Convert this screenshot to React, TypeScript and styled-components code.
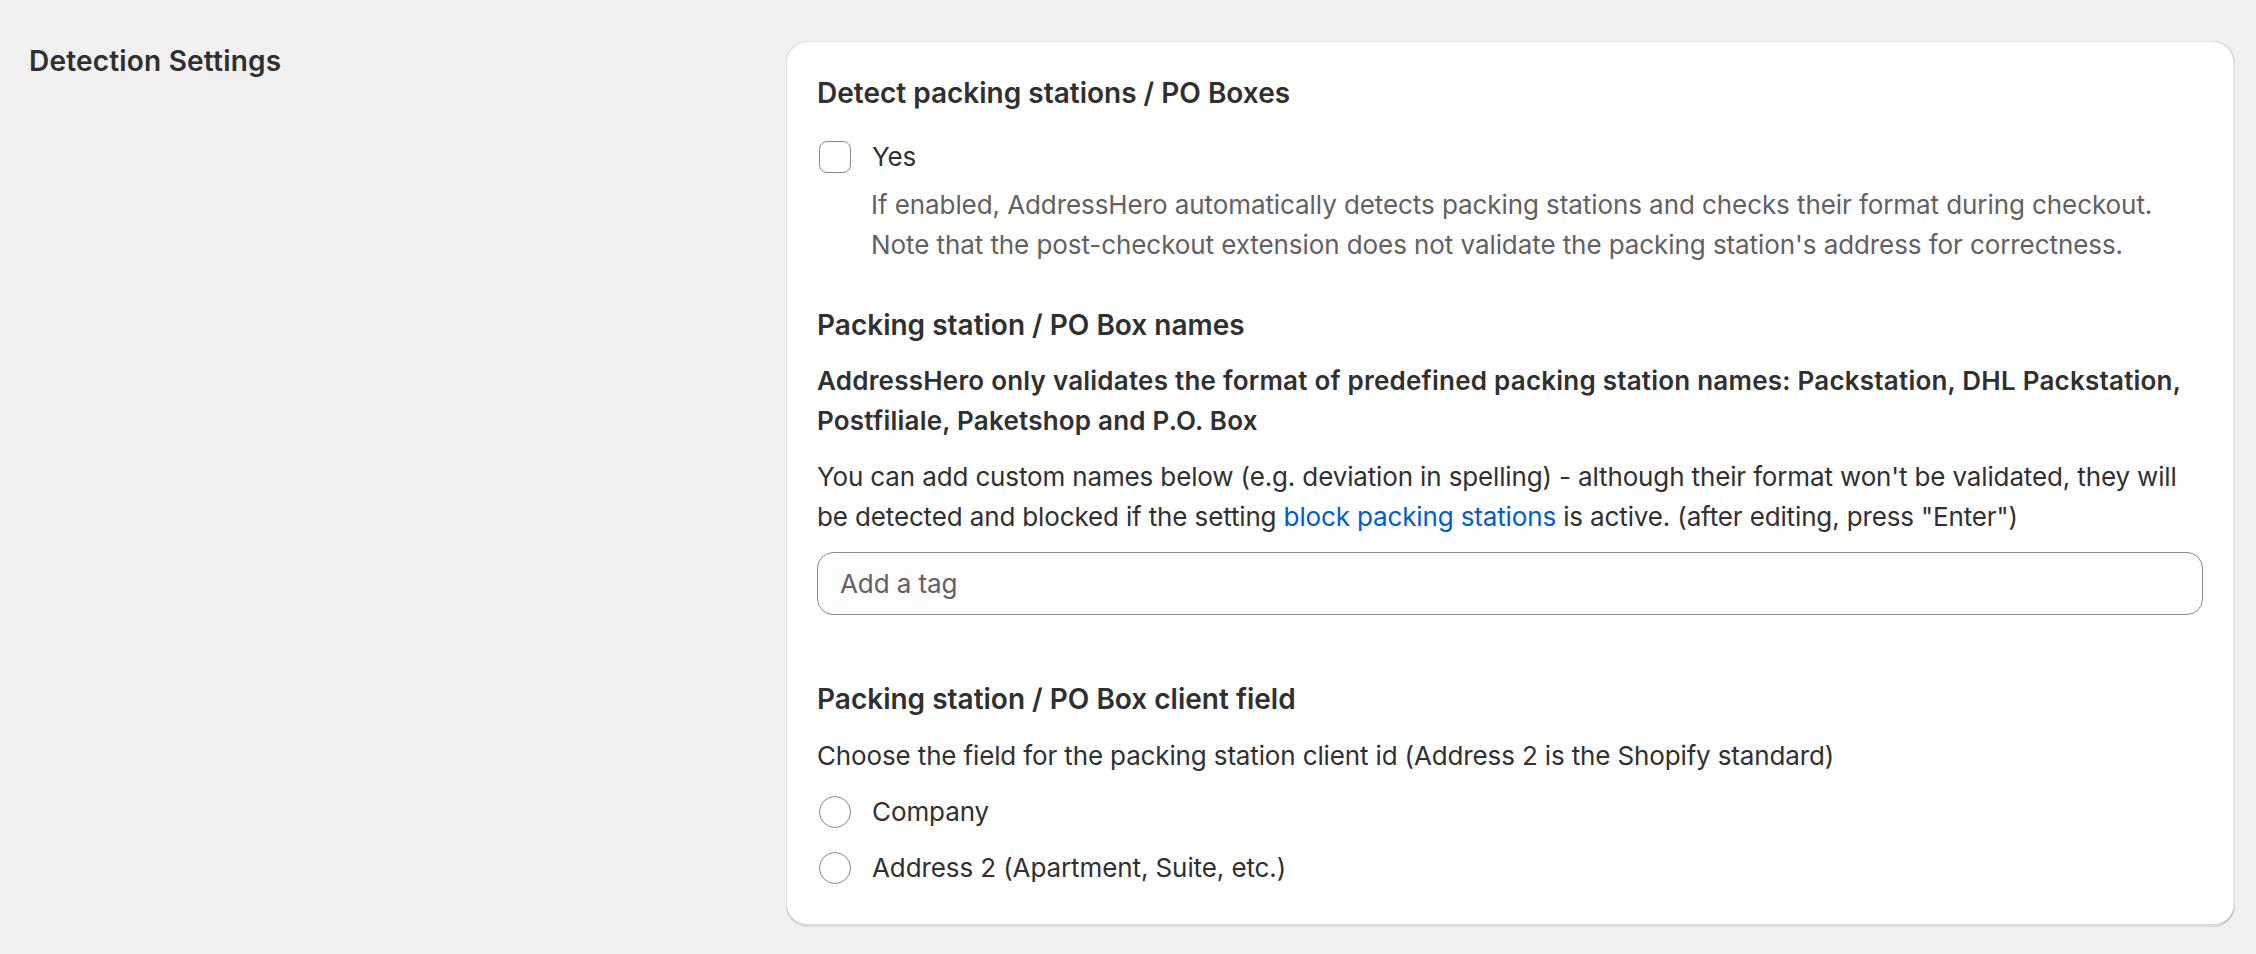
import styled, { createGlobalStyle } from 'styled-components';

const GlobalStyle = createGlobalStyle`
  body {
    margin: 0;
    background: #f1f1f1;
    font-family: Inter, "Noto Sans", sans-serif;
    color: #303030;
    -webkit-font-smoothing: antialiased;
  }
`;

function App() {
  return (
    <>
      <GlobalStyle />
      <Page>
        <Annotation>Detection Settings</Annotation>
        <Card>
          <Heading>Detect packing stations / PO Boxes</Heading>
          <ChoiceRow $top={24}>
            <Checkbox type="checkbox" />
            <ChoiceLabel>Yes</ChoiceLabel>
          </ChoiceRow>
          <HelpText>
            If enabled, AddressHero automatically detects packing stations and checks their format during checkout.
            <br />
            Note that the post-checkout extension does not validate the packing station&apos;s address for correctness.
          </HelpText>

          <Heading $top={40}>Packing station / PO Box names</Heading>
          <Text $top={16} $bold>
            AddressHero only validates the format of predefined packing station names: Packstation, DHL Packstation,
            <br />
            Postfiliale, Paketshop and P.O. Box
          </Text>
          <Text $top={16}>
            You can add custom names below (e.g. deviation in spelling) - although their format won&apos;t be validated, they will
            <br />
            be detected and blocked if the setting <Link href="#">block packing stations</Link> is active. (after editing, press &quot;Enter&quot;)
          </Text>
          <TagInput placeholder="Add a tag" />

          <Heading $top={64}>Packing station / PO Box client field</Heading>
          <Text $top={17}>Choose the field for the packing station client id (Address 2 is the Shopify standard)</Text>
          <ChoiceRow $top={16}>
            <Radio type="radio" name="client-field" />
            <ChoiceLabel>Company</ChoiceLabel>
          </ChoiceRow>
          <ChoiceRow $top={16}>
            <Radio type="radio" name="client-field" />
            <ChoiceLabel>Address 2 (Apartment, Suite, etc.)</ChoiceLabel>
          </ChoiceRow>
        </Card>
      </Page>
    </>
  );
}

export default App;

const Page = styled.div`
  display: grid;
  grid-template-columns: 757px 1fr;
  align-items: start;
  padding: 41px 21px 30px 29px;
`;

const Annotation = styled.h2`
  margin: 0;
  font-size: 28px;
  line-height: 40px;
  font-weight: 600;
  letter-spacing: 0.2px;
  color: #303030;
`;

const Card = styled.div`
  display: flex;
  flex-direction: column;
  padding: 32px 32px 39px 31px;
  background: #ffffff;
  border-radius: 22px;
  box-shadow:
    inset 1px 0 0 0 rgba(0, 0, 0, 0.1),
    inset -2px 0 0 0 rgba(0, 0, 0, 0.11),
    inset 0 -3px 0 0 rgba(0, 0, 0, 0.14),
    inset 0 1px 0 0 rgba(204, 204, 204, 0.5);
`;

const Heading = styled.h3<{ $top?: number }>`
  margin: ${({ $top }) => $top ?? 0}px 0 0;
  font-size: 28px;
  line-height: 40px;
  font-weight: 600;
`;

const Text = styled.p<{ $top?: number; $bold?: boolean }>`
  margin: ${({ $top }) => $top ?? 0}px 0 0;
  font-size: 26px;
  line-height: 40px;
  font-weight: ${({ $bold }) => ($bold ? 600 : 400)};
  letter-spacing: ${({ $bold }) => ($bold ? '0.22px' : '-0.14px')};
  white-space: nowrap;
`;

const HelpText = styled.p`
  margin: 8px 0 0 54px;
  font-size: 26px;
  line-height: 40px;
  letter-spacing: -0.08px;
  color: #616161;
  white-space: nowrap;
`;

const Link = styled.a`
  color: #005bd3;
  text-decoration: none;
`;

const ChoiceRow = styled.label<{ $top?: number }>`
  display: flex;
  align-items: center;
  gap: 21px;
  height: 40px;
  padding-left: 2px;
  margin-top: ${({ $top }) => $top ?? 0}px;
`;

const ChoiceLabel = styled.span`
  font-size: 26px;
  line-height: 40px;
  letter-spacing: -0.1px;
`;

const Checkbox = styled.input`
  appearance: none;
  margin: 0;
  width: 32px;
  height: 32px;
  border: 1px solid #8a8a8a;
  border-radius: 8px;
  background: #ffffff;
`;

const Radio = styled.input`
  appearance: none;
  margin: 0;
  width: 32px;
  height: 32px;
  border: 1px solid #8a8a8a;
  border-radius: 50%;
  background: #ffffff;
`;

const TagInput = styled.input`
  box-sizing: border-box;
  margin-top: 15px;
  width: 100%;
  height: 63px;
  padding: 0 22px;
  border: 1px solid #8a8a8a;
  border-radius: 16px;
  background: #fdfdfd;
  font-family: inherit;
  font-size: 26px;
  letter-spacing: -0.1px;
  color: #303030;
  outline: none;

  &::placeholder {
    color: #616161;
  }
`;
